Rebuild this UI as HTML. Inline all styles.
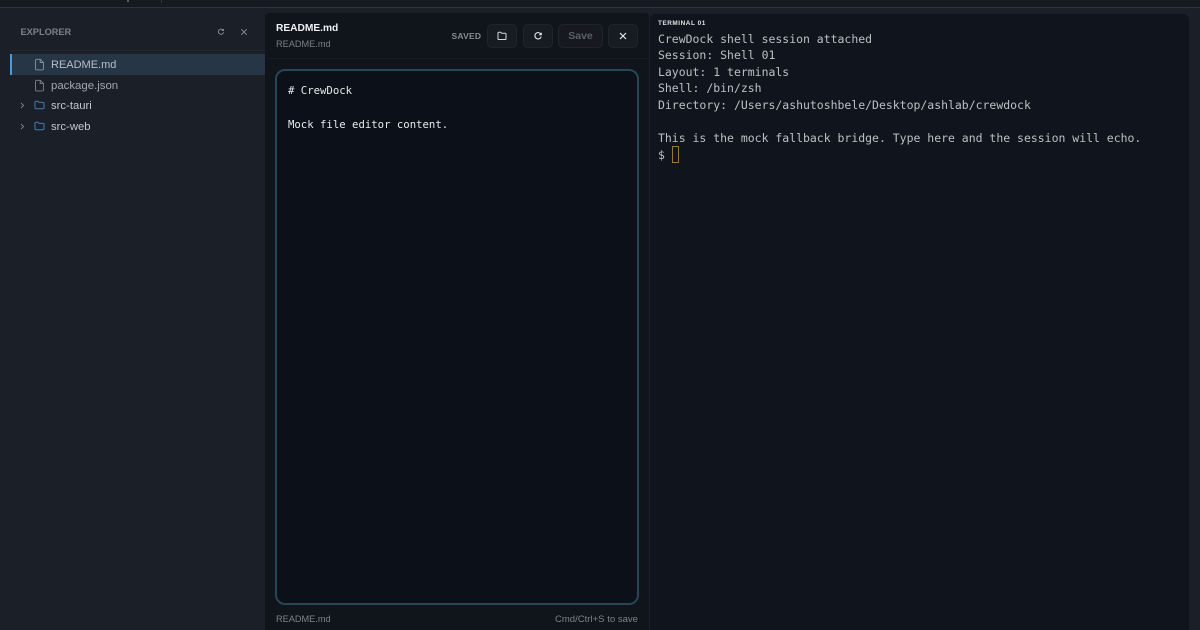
<!DOCTYPE html>
<html>
<head>
<meta charset="utf-8">
<style>
html,body{margin:0;padding:0;width:1200px;height:630px;overflow:hidden;background:#1a1f28}
*{box-sizing:border-box}
#r{position:absolute;left:0;top:0;width:1200px;height:630px;filter:blur(.3px)}
.a{position:absolute}
.t{position:absolute;white-space:nowrap;font-family:"Liberation Sans",sans-serif}
.m{position:absolute;white-space:pre;font-family:"DejaVu Sans Mono","Liberation Mono",monospace}
svg{position:absolute;fill:none}
.btn{position:absolute;top:24px;height:24px;border:1px solid #20252d;border-radius:5px;background:#171b22}
</style>
</head>
<body>
<div id="r">
<div class="a" style="left:0;top:0;width:1200px;height:7px;background:#151a21"></div>
<div class="a" style="left:127px;top:0;width:2px;height:2px;background:#565b63"></div>
<div class="a" style="left:161px;top:0;width:1px;height:3px;background:#33383f"></div>
<div class="a" style="left:0;top:7px;width:1200px;height:1px;background:#2e343c"></div>

<!-- Explorer -->
<div class="a" style="left:10px;top:50px;width:255px;height:1px;background:#20252e"></div>
<div class="t" style="left:20.5px;top:25.5px;font-size:9.2px;line-height:13px;font-weight:700;letter-spacing:.02px;color:#7c828b">EXPLORER</div>
<svg style="left:216px;top:27px" width="10" height="10" viewBox="0 0 10 10" stroke="#8b9097" stroke-width=".9"><path d="M7.2 3.4A2.6 2.6 0 1 0 7.5 5.2M7.4 2V3.6H5.8"/></svg>
<svg style="left:240px;top:28px" width="8" height="8" viewBox="0 0 8 8" stroke="#8b9097" stroke-width=".9"><path d="M1.2 1.2L6.8 6.8M6.8 1.2L1.2 6.8"/></svg>

<div class="a" style="left:10px;top:54px;width:255px;height:21px;background:#263646"></div>
<div class="a" style="left:10px;top:54px;width:2px;height:21px;background:#4f9ad4"></div>

<svg style="left:34px;top:58px" width="11" height="13" viewBox="0 0 11 13" stroke="#8b929a" stroke-width=".9"><path d="M1.5 2.5a1.2 1.2 0 0 1 1.2-1.2H6.3L9.5 4.5V10.7a1.2 1.2 0 0 1-1.2 1.2H2.7a1.2 1.2 0 0 1-1.2-1.2ZM6.2 1.4V4.6H9.4"/></svg>
<div class="t" style="left:51px;top:57.5px;font-size:11px;line-height:15px;color:#b9bec5">README.md</div>

<svg style="left:34px;top:79px" width="11" height="13" viewBox="0 0 11 13" stroke="#7d838b" stroke-width=".9"><path d="M1.5 2.5a1.2 1.2 0 0 1 1.2-1.2H6.3L9.5 4.5V10.7a1.2 1.2 0 0 1-1.2 1.2H2.7a1.2 1.2 0 0 1-1.2-1.2ZM6.2 1.4V4.6H9.4"/></svg>
<div class="t" style="left:51px;top:78.5px;font-size:11.4px;line-height:15px;color:#a3a8af">package.json</div>

<svg style="left:19px;top:101px" width="7" height="9" viewBox="0 0 7 9" stroke="#7d838b" stroke-width=".9"><path d="M2 2L4.6 4.5L2 7"/></svg>
<svg style="left:34px;top:100px" width="11" height="10" viewBox="0 0 11 10" stroke="#3f7fae" stroke-width="1"><path d="M1 2.2a1 1 0 0 1 1-1H4L5 2.4H9a1 1 0 0 1 1 1V7.8a1 1 0 0 1-1 1H2a1 1 0 0 1-1-1Z"/></svg>
<div class="t" style="left:51px;top:99px;font-size:11.3px;line-height:15px;color:#c3c8ce">src-tauri</div>

<svg style="left:19px;top:122px" width="7" height="9" viewBox="0 0 7 9" stroke="#7d838b" stroke-width=".9"><path d="M2 2L4.6 4.5L2 7"/></svg>
<svg style="left:34px;top:121px" width="11" height="10" viewBox="0 0 11 10" stroke="#3f7fae" stroke-width="1"><path d="M1 2.2a1 1 0 0 1 1-1H4L5 2.4H9a1 1 0 0 1 1 1V7.8a1 1 0 0 1-1 1H2a1 1 0 0 1-1-1Z"/></svg>
<div class="t" style="left:51px;top:119.5px;font-size:11.3px;line-height:15px;color:#c3c8ce">src-web</div>

<!-- Editor panel -->
<div class="a" style="left:265px;top:13px;width:384px;height:617px;background:#10141b;border-radius:4px 4px 0 0"></div>
<div class="a" style="left:266px;top:58px;width:383px;height:1px;background:#181d24"></div>
<div class="t" style="left:276px;top:22px;font-size:10.2px;line-height:14px;font-weight:700;color:#eef0f2">README.md</div>
<div class="t" style="left:276px;top:37.5px;font-size:9.2px;line-height:13px;color:#7a8088">README.md</div>
<div class="t" style="left:451.5px;top:29.5px;font-size:8.5px;line-height:12px;font-weight:700;letter-spacing:.2px;color:#858b92">SAVED</div>

<div class="btn" style="left:487px;width:30px"></div>
<svg style="left:497px;top:31px" width="10" height="10" viewBox="0 0 10 10" stroke="#d5d8dc" stroke-width="1"><path d="M1 2a.8.8 0 0 1 .8-.8H3.7L4.6 2.3H8.2a.8.8 0 0 1 .8.8V7.7a.8.8 0 0 1-.8.8H1.8A.8.8 0 0 1 1 7.7Z"/></svg>
<div class="btn" style="left:523px;width:30px"></div>
<svg style="left:533px;top:31px" width="10" height="10" viewBox="0 0 10 10" stroke="#e2e4e7" stroke-width="1.1"><path d="M8 3.4A3.2 3.2 0 1 0 8.2 5.6M8.3 1.7V3.7H6.2"/></svg>
<div class="btn" style="left:558px;width:45px;background:#161a20"></div>
<div class="t" style="left:558px;top:28.5px;width:45px;text-align:center;font-size:10.5px;line-height:14px;font-weight:700;color:#5a5f66">Save</div>
<div class="btn" style="left:608px;width:30px"></div>
<svg style="left:619px;top:32px" width="8" height="8" viewBox="0 0 8 8" stroke="#e6e8ea" stroke-width="1.2"><path d="M1 1L7 7M7 1L1 7"/></svg>

<div class="a" style="left:275px;top:69px;width:364px;height:536px;border:2px solid #294558;border-radius:10px;background:#0c1018"></div>
<div class="m" style="left:288px;top:82px;font-size:10.65px;line-height:17px;color:#e7e9ec"># CrewDock

Mock file editor content.</div>

<div class="t" style="left:276px;top:613px;font-size:9.2px;line-height:13px;color:#7d838a">README.md</div>
<div class="t" style="right:562px;top:613px;font-size:9.55px;line-height:13px;color:#7d838a">Cmd/Ctrl+S to save</div>

<!-- Terminal -->
<div class="a" style="left:650px;top:14px;width:539px;height:616px;background:#10141c;border-radius:6px 6px 0 0"></div>
<div class="t" style="left:658px;top:17.6px;font-size:6.4px;line-height:10px;font-weight:700;letter-spacing:.55px;color:#dfe2e5;transform:translateY(1px)">TERMINAL 01</div>
<div class="m" style="left:658px;top:30.5px;font-size:11.48px;line-height:16.6px;color:#bcc0c5">CrewDock shell session attached
Session: Shell 01
Layout: 1 terminals
Shell: /bin/zsh
Directory: /Users/ashutoshbele/Desktop/ashlab/crewdock

This is the mock fallback bridge. Type here and the session will echo.
$</div>
<div class="a" style="left:672px;top:146px;width:7px;height:17px;border:1px solid #96763f;background:#12161c"></div>
</div>
</body>
</html>
